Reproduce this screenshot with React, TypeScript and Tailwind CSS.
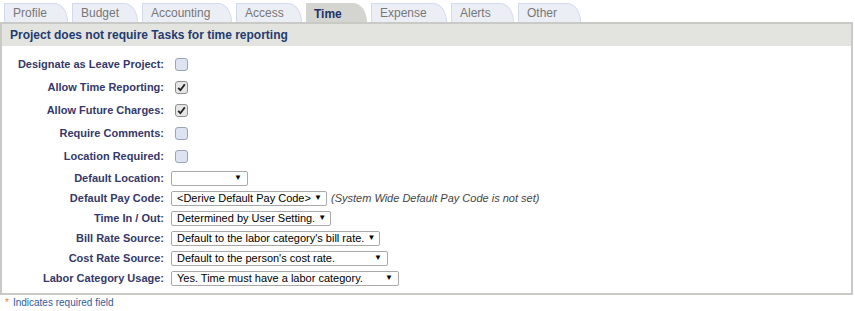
import React from "react";

const tabs = [
  { label: "Profile", w: 64 },
  { label: "Budget", w: 66 },
  { label: "Accounting", w: 90 },
  { label: "Access", w: 66 },
  { label: "Time", w: 61, active: true },
  { label: "Expense", w: 76 },
  { label: "Alerts", w: 63 },
  { label: "Other", w: 63 },
];

function Checkbox({ checked }: { checked?: boolean }) {
  return (
    <div
      className={
        "ml-[11px] w-[13px] h-[13px] rounded-[3px] border flex items-center justify-center " +
        (checked
          ? "border-[#8e8e8e] bg-[#e6e6e6]"
          : "border-[#9aa3b8] bg-[#dde3f0]")
      }
    >
      {checked && (
        <svg width="9" height="9" viewBox="0 0 9 9">
          <path d="M1.2 4.8 L3.4 7.2 L7.8 1.4" fill="none" stroke="#222" strokeWidth="1.8" />
        </svg>
      )}
    </div>
  );
}

function Select({ text, w, note }: { text: string; w: number; note?: string }) {
  return (
    <div className="flex items-center ml-[7px] whitespace-nowrap">
      <div
        className="h-[15px] border border-[#a9a9a9] rounded-[2px] bg-white flex items-center justify-between pl-[5px] pr-[5px] text-[11px] text-black leading-none overflow-hidden shrink-0"
        style={{ width: w }}
      >
        <span className="whitespace-nowrap">{text}</span>
        <span className="text-[8px] ml-[3px] shrink-0">▼</span>
      </div>
      {note && <span className="ml-[4px] text-[11px] italic text-[#444] whitespace-nowrap">{note}</span>}
    </div>
  );
}

function Label({ children }: { children: React.ReactNode }) {
  return (
    <div className="w-[162px] text-right font-bold text-[11px] text-[#34396a] leading-none whitespace-nowrap">{children}</div>
  );
}

export default function App() {
  return (
    <div className="w-[855px] h-[311px] bg-white" style={{ fontFamily: '"Liberation Sans", Arial, sans-serif' }}>
      <div className="flex pt-[3px] pl-[4px] gap-[4px] h-[22px]">
        {tabs.map((t) => (
          <div
            key={t.label}
            className={
              "h-[19px] rounded-tr-[14px_19px] pl-[8px] pt-[3px] text-[12px] leading-[13px] " +
              (t.active
                ? "bg-[#d4d5d1] text-[#1f3268] font-bold pt-[5px]"
                : "bg-[#eceef6] border-l border-t border-r border-[#d4daee] text-[#777]")
            }
            style={{ width: t.w }}
          >
            {t.label}
          </div>
        ))}
      </div>
      <div className="w-[853px] border-2 border-[#c9cac6]">
        <div className="h-[22px] bg-[#e3e4e0] flex items-center pl-[8px] text-[12px] font-bold text-[#1f3b72]">
          Project does not require Tasks for time reporting
        </div>
        <div className="pt-[7px] pb-[5px] flex flex-col">
          {[
            ["Designate as Leave Project:", false],
            ["Allow Time Reporting:", true],
            ["Allow Future Charges:", true],
            ["Require Comments:", false],
            ["Location Required:", false],
          ].map(([l, c]) => (
            <div key={l as string} className="h-[23px] flex items-center">
              <Label>{l as string}</Label>
              <Checkbox checked={c as boolean} />
            </div>
          ))}
          <div className="h-[20px] flex items-center">
            <Label>Default Location:</Label>
            <Select text="" w={77} />
          </div>
          <div className="h-[20px] flex items-center">
            <Label>Default Pay Code:</Label>
            <Select text="<Derive Default Pay Code>" w={156} note="(System Wide Default Pay Code is not set)" />
          </div>
          <div className="h-[20px] flex items-center">
            <Label>Time In / Out:</Label>
            <Select text="Determined by User Setting." w={160} />
          </div>
          <div className="h-[20px] flex items-center">
            <Label>Bill Rate Source:</Label>
            <Select text="Default to the labor category's bill rate." w={209} />
          </div>
          <div className="h-[20px] flex items-center">
            <Label>Cost Rate Source:</Label>
            <Select text="Default to the person's cost rate." w={217} />
          </div>
          <div className="h-[20px] flex items-center">
            <Label>Labor Category Usage:</Label>
            <Select text="Yes. Time must have a labor category." w={228} />
          </div>
        </div>
      </div>
      <div className="h-[14px] flex items-center pl-[5px] text-[10px]">
        <span className="text-[#e8823c] mr-[4px]">*</span>
        <span className="text-[#2d5c9c]">Indicates required field</span>
      </div>
    </div>
  );
}
